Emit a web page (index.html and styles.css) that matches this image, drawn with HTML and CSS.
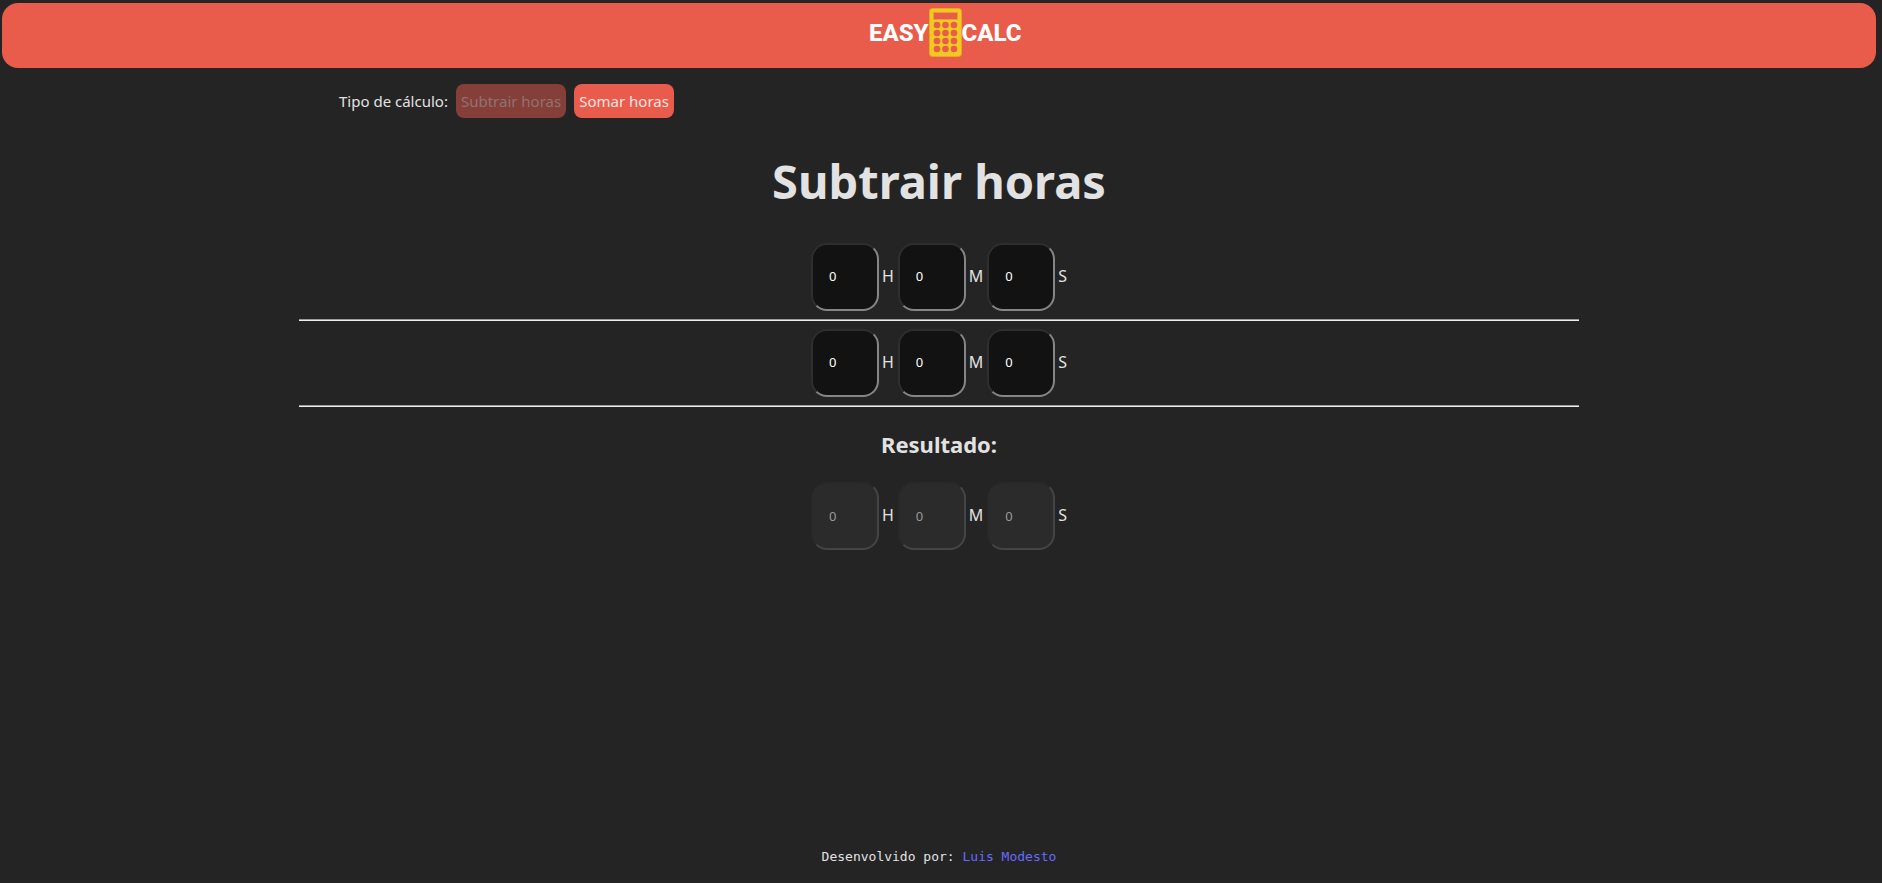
FILE: index.html
```html
<!DOCTYPE html>
<html lang="pt-BR">
<head>
<meta charset="utf-8">
<meta name="viewport" content="width=device-width, initial-scale=1">
<title>Easy Calc</title>
<link rel="stylesheet" href="styles.css">
</head>
<body>
<header class="topbar">
  <div class="logo">
    <span class="logo-word logo-left">EASY</span>
    <svg class="logo-icon" viewBox="0 0 33 49" aria-hidden="true">
      <rect width="33" height="49" rx="4" fill="#e9a526"/>
      <rect x="1" y="1" width="31" height="47" rx="3" fill="#f1ca21"/>
      <rect x="4.500" y="4.500" width="24" height="7" fill="#e95c4b" stroke="#ee9c30"/>
      <g fill="#e95c4b">
        <circle cx="8" cy="17" r="3.300"/><circle cx="16.500" cy="17" r="3.300"/><circle cx="25" cy="17" r="3.300"/>
        <circle cx="8" cy="25" r="3.300"/><circle cx="16.500" cy="25" r="3.300"/><circle cx="25" cy="25" r="3.300"/>
        <circle cx="8" cy="33" r="3.300"/><circle cx="16.500" cy="33" r="3.300"/><circle cx="25" cy="33" r="3.300"/>
        <circle cx="8" cy="41" r="3.300"/><circle cx="16.500" cy="41" r="3.300"/><circle cx="25" cy="41" r="3.300"/>
      </g>
    </svg>
    <span class="logo-word logo-right">CALC</span>
  </div>
</header>
<main class="content">
  <nav class="modes">
    <span>Tipo de cálculo:</span>
    <button class="mode" type="button" disabled>Subtrair horas</button>
    <button class="mode" type="button">Somar horas</button>
  </nav>
  <h1 class="title">Subtrair horas</h1>
  <div class="row">
    <div class="unit"><input class="field" id="h1" type="text" value="0"><label for="h1">H</label></div>
    <div class="unit"><input class="field" id="m1" type="text" value="0"><label for="m1">M</label></div>
    <div class="unit"><input class="field" id="s1" type="text" value="0"><label for="s1">S</label></div>
  </div>
  <hr class="rule">
  <div class="row">
    <div class="unit"><input class="field" id="h2" type="text" value="0"><label for="h2">H</label></div>
    <div class="unit"><input class="field" id="m2" type="text" value="0"><label for="m2">M</label></div>
    <div class="unit"><input class="field" id="s2" type="text" value="0"><label for="s2">S</label></div>
  </div>
  <hr class="rule">
  <h2 class="subtitle">Resultado:</h2>
  <div class="row">
    <div class="unit"><input class="field" id="h3" type="text" value="0" disabled><label for="h3">H</label></div>
    <div class="unit"><input class="field" id="m3" type="text" value="0" disabled><label for="m3">M</label></div>
    <div class="unit"><input class="field" id="s3" type="text" value="0" disabled><label for="s3">S</label></div>
  </div>
</main>
<footer class="footer">Desenvolvido por: <a class="author" href="#">Luis Modesto</a></footer>
</body>
</html>
```
FILE: styles.css
```css
* { box-sizing: border-box; }

body {
  margin: 0;
  min-height: 100vh;
  padding: 3px 6px 16px 2px;
  display: flex;
  flex-direction: column;
  background: #242424;
  color: #e2e2e2;
  font: 16px/24px "Noto Sans", "Open Sans", sans-serif;
}

.topbar {
  display: flex;
  justify-content: center;
  height: 65px;
  padding-top: 5px;
  border-radius: 16px;
  background: #e95c4b;
}

.logo {
  display: grid;
  grid-template-columns: 60px 33px 60px;
  align-items: center;
  height: 49px;
  margin-left: 12px;
}

.logo-word {
  color: #fff;
  font: 800 24px/32px Roboto, "Liberation Sans", sans-serif;
}

.logo-left { justify-self: end; }
.logo-icon { width: 33px; height: 49px; }

.content {
  flex: 1;
  width: 100%;
  max-width: 1280px;
  margin: 0 auto;
}

.modes {
  display: flex;
  align-items: center;
  gap: 8px;
  padding: 16px 40px 0;
  font-size: 15px;
}

.mode {
  height: 34px;
  padding: 0 5px;
  border: 0;
  border-radius: 8px;
  background: #e95c4b;
  color: #f4e3e1;
  font: inherit;
}

.mode:disabled {
  background: #863f38;
  color: #8d7471;
}

.title {
  margin: 35px 0 34px;
  text-align: center;
  font-size: 47px;
  line-height: 56px;
  font-weight: 700;
}

.row {
  display: flex;
  justify-content: center;
  gap: 4px;
}

.unit {
  display: flex;
  align-items: center;
  gap: 3px;
}

.unit label { padding-bottom: 2px; }

.field {
  width: 68px;
  height: 68px;
  padding: 0 16px 2px;
  border: 2px solid;
  border-color: #2e2e2e #858585 #858585 #2e2e2e;
  border-radius: 16px;
  background: #121212;
  color: #fff;
  font: 13px/16px "Noto Sans", "Open Sans", sans-serif;
}

.field:disabled {
  padding-bottom: 0;
  border-color: #292929 #454545 #454545 #292929;
  background: #2b2b2b;
  color: #999;
}

.rule {
  height: 2px;
  margin: 8px 0;
  border: 0;
  border-top: 1px solid #9a9a9a;
  background: #eee;
}

.subtitle {
  margin: 21px 0 22px;
  text-align: center;
  font-size: 22px;
  line-height: 32px;
  font-weight: 700;
}

.footer {
  text-align: center;
  font: 13px/20px "DejaVu Sans Mono", "Liberation Mono", monospace;
}

.author {
  color: #646cff;
  text-decoration: none;
}
```
